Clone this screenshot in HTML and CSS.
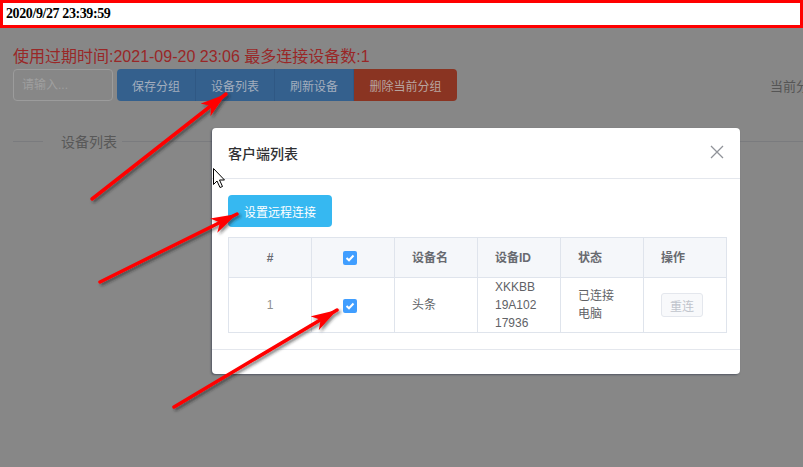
FILE: index.html
```html
<!DOCTYPE html>
<html lang="zh-CN">
  <head>
    <meta charset="UTF-8" />
    <meta name="viewport" content="width=device-width, initial-scale=1.0" />
    <title>设备列表</title>
    <link rel="stylesheet" href="styles.css">
  </head>
  <body>
    <!-- clock bar on top of everything -->
    <div class="clock">2020/9/27 23:39:59</div>

    <!-- page behind the dialog mask -->
    <div class="page">
      <p class="expire">使用过期时间:2021-09-20 23:06 最多连接设备数:1</p>
      <div class="toolbar">
        <input class="search" type="text" placeholder="请输入..." />
        <div class="btn-group">
          <button class="btn btn-blue">保存分组</button>
          <button class="btn btn-blue">设备列表</button>
          <button class="btn btn-blue">刷新设备</button>
          <button class="btn btn-red">删除当前分组</button>
        </div>
        <span class="current">当前分</span>
      </div>
      <div class="divider">
        <span class="line line-short"></span>
        <span class="divider-text">设备列表</span>
        <span class="line"></span>
      </div>
    </div>

    <!-- dialog -->
    <div class="dialog">
      <div class="dialog-header">
        <span class="dialog-title">客户端列表</span>
        <svg class="close" width="14" height="14" viewBox="0 0 14 14">
          <path d="M1 1 L13 13 M13 1 L1 13" stroke="#909399" stroke-width="1.3" fill="none" />
        </svg>
      </div>
      <div class="dialog-body">
        <button class="btn-remote">设置远程连接</button>
        <table class="device-table">
          <thead>
            <tr>
              <th class="center">#</th>
              <th class="check-cell"><span class="check"><svg width="10" height="8" viewBox="0 0 10 8"><path d="M1.5 4 L4 6.3 L8.5 1.5" stroke="#fff" stroke-width="2" fill="none" /></svg></span></th>
              <th>设备名</th>
              <th>设备ID</th>
              <th>状态</th>
              <th>操作</th>
            </tr>
          </thead>
          <tbody>
            <tr>
              <td class="center num">1</td>
              <td class="check-cell"><span class="check"><svg width="10" height="8" viewBox="0 0 10 8"><path d="M1.5 4 L4 6.3 L8.5 1.5" stroke="#fff" stroke-width="2" fill="none" /></svg></span></td>
              <td>头条</td>
              <td>XKKBB<br />19A102<br />17936</td>
              <td class="status">已连接<br />电脑</td>
              <td><button class="btn-reconnect" disabled>重连</button></td>
            </tr>
          </tbody>
        </table>
      </div>
      <div class="dialog-footer"></div>
    </div>

    <!-- annotation arrows and mouse cursor drawn over the screenshot -->
    <svg class="marks" width="803" height="467" viewBox="0 0 803 467">
      <defs>
        <filter id="shadow" x="-20%" y="-20%" width="140%" height="140%">
          <feDropShadow dx="2" dy="2" stdDeviation="1.5" flood-color="#222" flood-opacity="0.55" />
        </filter>
        <marker id="head" markerUnits="userSpaceOnUse" markerWidth="28" markerHeight="18" refX="26" refY="8" orient="auto">
          <path d="M0 0 L26 8 L0 16 L7 8 Z" fill="#f00" />
        </marker>
      </defs>
      <g filter="url(#shadow)" stroke="#f00" stroke-width="3.5" stroke-linecap="round">
        <line x1="92" y1="199" x2="226" y2="94" marker-end="url(#head)" />
        <line x1="100" y1="282" x2="237" y2="214" marker-end="url(#head)" />
        <line x1="174" y1="407" x2="337" y2="310" marker-end="url(#head)" />
      </g>
      <path d="M213.5 168.5 L213.5 184.5 L217 181 L220 187.5 L222.5 186.5 L219.5 180 L224.5 180 Z" fill="#fff" stroke="#000" stroke-width="1" stroke-linejoin="round" />
    </svg>
  </body>
</html>
```

FILE: styles.css
```css
body {
  margin: 0;
  width: 803px;
  height: 467px;
  overflow: hidden;
  position: relative;
  background-color: #878787;
  font-family: "Liberation Sans", "Noto Sans CJK SC", sans-serif;
}
.clock {
  height: 28px;
  box-sizing: border-box;
  border: 3px solid #ff0000;
  background: #fff;
  padding-left: 3px;
  font-family: "Liberation Serif", "Noto Sans CJK SC", serif;
  font-weight: bold;
  font-size: 14px;
  letter-spacing: -0.4px;
  line-height: 22px;
  color: #000;
}
.page {
  padding-left: 13px;
}
.expire {
  margin: 18px 0 0;
  font-size: 16px;
  line-height: 22px;
  color: #992727;
}
.toolbar {
  display: flex;
  align-items: center;
  margin-top: 1px;
  height: 32px;
}
.search {
  width: 100px;
  height: 32px;
  box-sizing: border-box;
  border: 1px solid #9c9c9c;
  border-radius: 4px;
  background: #878787;
  padding: 0 8px;
  font-family: inherit;
  font-size: 12px;
  outline: none;
}
.search::placeholder {
  color: #9f9f9f;
}
.btn-group {
  display: flex;
  margin-left: 4px;
}
.btn {
  height: 32px;
  padding: 0 15px;
  border: none;
  font-family: inherit;
  font-size: 12px;
  cursor: pointer;
}
.btn-blue {
  background-color: #34608d;
  color: #a3aebd;
  border-right: 1px solid #2f5884;
}
.btn-blue:first-child {
  border-radius: 4px 0 0 4px;
}
.btn-red {
  background-color: #8a3422;
  color: #b8a5a0;
  padding: 0 15.5px;
  border-radius: 0 4px 4px 0;
}
.current {
  margin-left: auto;
  white-space: nowrap;
  font-size: 13px;
  color: #555;
  margin-right: -6px;
}
.divider {
  display: flex;
  align-items: center;
  margin-top: 30px;
  height: 20px;
}
.line {
  flex: 1;
  height: 1px;
  background: #7a7b7e;
}
.line-short {
  flex: none;
  width: 30px;
}
.divider-text {
  padding: 0 5px 0 18px;
  font-size: 14px;
  color: #585858;
}
.dialog {
  position: absolute;
  left: 212px;
  top: 128px;
  width: 528px;
  background: #fff;
  border-radius: 4px;
  box-shadow: -1px 1px 2px rgba(40, 50, 70, 0.55);
}
.dialog-header {
  display: flex;
  align-items: center;
  justify-content: space-between;
  height: 50px;
  padding: 0 16px;
  border-bottom: 1px solid #e4e7ed;
}
.dialog-title {
  font-size: 14px;
  font-weight: 500;
  color: #303133;
}
.close {
  margin-top: -2px;
}
.dialog-body {
  padding: 16px 13px 16px 16px;
  border-bottom: 1px solid #e4e7ed;
}
.btn-remote {
  display: block;
  height: 32px;
  padding: 0 16px;
  border: none;
  border-radius: 4px;
  background-color: #36b8f1;
  color: #fff;
  font-family: inherit;
  font-size: 12px;
  margin-bottom: 10px;
}
.device-table {
  width: 499px;
  table-layout: fixed;
  border-collapse: collapse;
  font-size: 12px;
  color: #606266;
}
.device-table th,
.device-table td {
  border: 1px solid #dfe4ec;
  padding: 0 0 0 17px;
  text-align: left;
  line-height: 18px;
}
.device-table th {
  height: 39px;
  background: #f5f7fa;
  font-weight: bold;
  color: #686a70;
}
.device-table td {
  height: 54px;
}
.device-table .center {
  text-align: center;
  padding: 0;
}
.device-table .check-cell {
  padding-left: 31px;
}
.num {
  color: #909090;
}
.status {
  line-height: 17px;
}
.check {
  display: inline-flex;
  align-items: center;
  justify-content: center;
  width: 14px;
  height: 14px;
  border-radius: 2px;
  background-color: #409eff;
  vertical-align: middle;
}
.btn-reconnect {
  height: 24px;
  padding: 0 8px;
  border: 1px solid #e4e7ed;
  border-radius: 3px;
  background: #f8f9fb;
  color: #c0c4cc;
  font-family: inherit;
  font-size: 12px;
}
.dialog-footer {
  height: 24px;
}
.marks {
  position: absolute;
  left: 0;
  top: 0;
  pointer-events: none;
}
```
